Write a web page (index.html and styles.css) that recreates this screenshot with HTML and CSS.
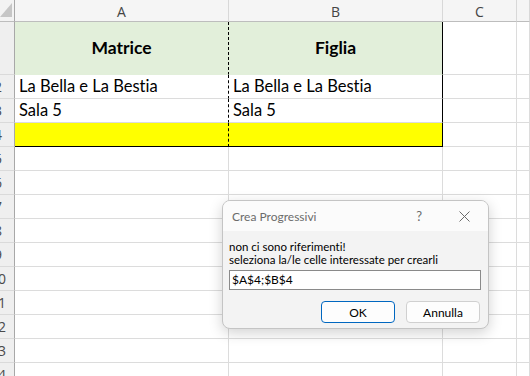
FILE: index.html
```html
<!DOCTYPE html>
<html>
<head>
<meta charset="utf-8">
<title>Crea Progressivi</title>
<link rel="stylesheet" href="styles.css">
</head>
<body>
<div class="sheet">
	<div class="corner"><svg width="14" height="21" viewBox="0 0 14 21"><polygon points="0,17 12,17 12,3" fill="#c6c6c6"/></svg></div>
	<div class="col">A</div>
	<div class="col">B</div>
	<div class="col">C</div>
	<div class="col"></div>

	<div class="row"><span>1</span></div>
	<div class="c hd ca">Matrice</div>
	<div class="c hd cb">Figlia</div>
	<div class="c"></div>
	<div class="c"></div>

	<div class="row"><span>2</span></div>
	<div class="c ca">La Bella e La Bestia</div>
	<div class="c cb">La Bella e La Bestia</div>
	<div class="c"></div>
	<div class="c"></div>

	<div class="row"><span>3</span></div>
	<div class="c ca">Sala 5</div>
	<div class="c cb">Sala 5</div>
	<div class="c"></div>
	<div class="c"></div>

	<div class="row"><span>4</span></div>
	<div class="c ca yel last"></div>
	<div class="c cb yel last"></div>
	<div class="c"></div>
	<div class="c"></div>

	<div class="row"><span>5</span></div><div class="c"></div><div class="c"></div><div class="c"></div><div class="c"></div>
	<div class="row"><span>6</span></div><div class="c"></div><div class="c"></div><div class="c"></div><div class="c"></div>
	<div class="row"><span>7</span></div><div class="c"></div><div class="c"></div><div class="c"></div><div class="c"></div>
	<div class="row"><span>8</span></div><div class="c"></div><div class="c"></div><div class="c"></div><div class="c"></div>
	<div class="row"><span>9</span></div><div class="c"></div><div class="c"></div><div class="c"></div><div class="c"></div>
	<div class="row"><span>10</span></div><div class="c"></div><div class="c"></div><div class="c"></div><div class="c"></div>
	<div class="row"><span>11</span></div><div class="c"></div><div class="c"></div><div class="c"></div><div class="c"></div>
	<div class="row"><span>12</span></div><div class="c"></div><div class="c"></div><div class="c"></div><div class="c"></div>
	<div class="row"><span>13</span></div><div class="c"></div><div class="c"></div><div class="c"></div><div class="c"></div>
	<div class="row"><span>14</span></div><div class="c"></div><div class="c"></div><div class="c"></div><div class="c"></div>
</div>

<div class="dlg">
	<div class="dlg-title">
		<span class="dlg-name">Crea Progressivi</span>
		<span class="dlg-help">?</span>
		<span class="dlg-close"><svg width="11" height="11" viewBox="0 0 11 11"><path d="M0.5 0.5L10.5 10.5M10.5 0.5L0.5 10.5" stroke="#6b6b6b" stroke-width="1" fill="none"/></svg></span>
	</div>
	<div class="dlg-body">
		<p class="msg">non ci sono riferimenti!<br>seleziona la/le celle interessate per crearli</p>
		<div class="inp">$A$4;$B$4</div>
		<div class="btns">
			<span class="btn ok">OK</span>
			<span class="btn">Annulla</span>
		</div>
	</div>
</div>
</body>
</html>
```

FILE: styles.css
```css
*{margin:0; padding:0; box-sizing:border-box;}
body{width:530px; height:376px; overflow:hidden; background:#fff; font-family:"Lato", sans-serif; color:#000; position:relative; font-variant-ligatures:none;}

.sheet{display:grid; grid-template-columns:15px 214px 214px 74px 13px; grid-template-rows:22px 53px repeat(13, 24px);}
.corner{background:#f3f3f3; border-right:1px solid #a8a8a8; border-bottom:1px solid #bdbdbd; overflow:hidden;}
.corner svg{display:block;}
.col{background:#f5f5f5; border-right:1px solid #d8d8d8; border-bottom:1px solid #bdbdbd; display:flex; align-items:center; justify-content:center; font:14px "Open Sans", sans-serif; color:#444; padding-top:1px;}
.row{background:#efefef; border-right:1px solid #a8a8a8; border-bottom:1px solid #dadada; overflow:hidden; display:flex; align-items:flex-end; font:14px "Open Sans", sans-serif; color:#4a4a4a;}
.row span{flex:none; width:30px; margin-left:-17px; text-align:center; line-height:20px; padding-bottom:1px;}

.c{border-right:1px solid #dcdcdc; border-bottom:1px solid #dcdcdc; display:flex; align-items:flex-end; padding:0 0 1px 4px; font-size:16.5px; line-height:21px; white-space:nowrap; overflow:hidden;}
.ca{border-right:1px dashed #000;}
.cb{border-right:1px solid #000;}
.hd{background:#e2efda; border-bottom-color:#e2efda; justify-content:center; align-items:center; font-weight:bold; font-size:17.5px; padding:0 0 2px 0;}
.yel{background:#ffff00; border-bottom-color:#ffff00;}
.last{border-bottom:1px solid #000;}

.dlg{position:absolute; left:222px; top:200px; width:267px; height:129px; border:1px solid #c4c4c4; border-radius:8px; background:#f3f3f3; box-shadow:0 4px 14px rgba(0,0,0,0.18); overflow:hidden; display:flex; flex-direction:column; font-size:12px;}
.dlg-title{height:30px; background:#fbfbfb; display:flex; align-items:center; padding:0 18px 0 9px; color:#6b6b6b;}
.dlg-name{flex:1;}
.dlg-help{margin-right:37px; font-size:13px;}
.dlg-close svg{display:block;}
.dlg-body{padding:9px 7px 0 6px; display:flex; flex-direction:column;}
.msg{line-height:13px; font-size:11.5px;}
.inp{margin-top:4px; height:20px; border:1px solid #8a8a8a; background:#fff; padding:0 2px; line-height:18px; font-size:12px;}
.btns{display:flex; justify-content:flex-end; gap:11px; margin-top:11px; padding-right:1px;}
.btn{width:74px; height:22px; border:1px solid #d0d0d0; border-radius:4px; background:#fdfdfd; display:flex; align-items:center; justify-content:center; font-size:12px;}
.btn.ok{border-color:#0067c0;}
```
